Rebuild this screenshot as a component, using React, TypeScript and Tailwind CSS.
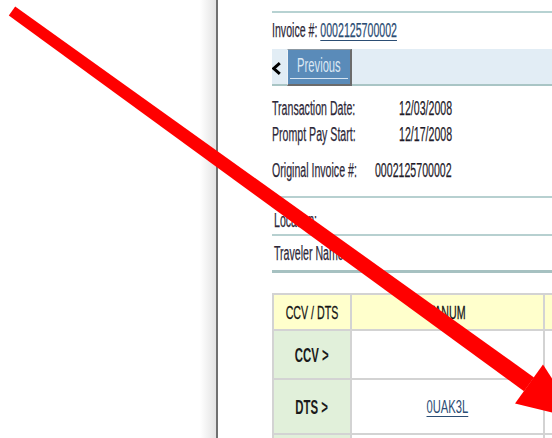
import React from "react";

function Sq({ children, className = "" }: { children: React.ReactNode; className?: string }) {
  return <span className={`inline-block whitespace-nowrap ${className}`}>{children}</span>;
}

function InfoRow({ label, value, className = "" }: { label: string; value: string; className?: string }) {
  return (
    <div className={`grid h-[22px] grid-cols-[180px] ${className}`}>
      <div className="col-start-1 row-start-1">
        <Sq className="origin-left scale-x-[0.53] text-[20px] leading-[22px] text-[#2d2838] [-webkit-text-stroke:0.25px_#2d2838]">{label}</Sq>
      </div>
      <div className="col-start-1 row-start-1 flex justify-end">
        <Sq className="origin-right scale-x-[0.53] text-[20px] leading-[22px] text-[#1f1c2a] [-webkit-text-stroke:0.25px_#1f1c2a]">{value}</Sq>
      </div>
    </div>
  );
}

function Rule({ className }: { className: string }) {
  return <div className={`w-full ${className}`} />;
}

function Arrow() {
  // shaft widens slightly toward the head, head points down-right
  return (
    <svg className="pointer-events-none absolute inset-0" width="552" height="438" viewBox="0 0 552 438">
      <polygon points="8.8,15.5 15.2,6.5 534,377.4 524,391.2" fill="#ff0000" />
      <polygon points="515,403.5 543,364.5 578,419" fill="#ff0000" />
    </svg>
  );
}

export default function App() {
  return (
    <div className="relative h-[438px] w-[552px] overflow-hidden bg-white font-['Liberation_Sans',Arial,sans-serif]">
      <div className="flex h-full">
        <div className="w-[200px] shrink-0 bg-white" />
        <div className="w-[16px] shrink-0 bg-linear-to-r from-white to-[#e3e3e3]" />
        <div className="w-[2px] shrink-0 bg-[#707070]" />
        <main className="min-w-0 flex-1 overflow-hidden">
          <div className="flex w-[600px] flex-col pl-[54px] pt-[11px]">
            <Rule className="h-[2px] bg-[#b7d2d2]" />

            <div className="h-[36px] pt-[6px]">
              <Sq className="origin-left scale-x-[0.53] text-[20px] leading-[22px] text-[#2d2838] [-webkit-text-stroke:0.25px_currentColor]">
                Invoice #:{" "}
                <a className="text-[#2b4d74] underline decoration-1 underline-offset-[3px]">0002125700002</a>
              </Sq>
            </div>

            <div className="flex h-[37px] items-start border-b-2 border-[#a9c5c5] bg-[#e2edf5]">
              <svg className="mt-[13px] shrink-0" width="9" height="13" viewBox="0 0 9 13">
                <path d="M7.8 1.2 L1.8 6.5 L7.8 11.8" fill="none" stroke="#000" strokeWidth="3" />
              </svg>
              <div className="ml-[6px] flex h-[37px] w-[65px] shrink-0 flex-col border-t border-r-2 border-b-2 border-l border-t-[#8b98a3] border-r-[#6b6b6b] border-b-[#6b6b6b] border-l-[#eef3f7] bg-[#5a8bb9] px-[2px]">
                <div className="flex h-[29px] items-center justify-center border-b border-[#d6e4f1] pt-[1px]">
                  <Sq className="origin-center scale-x-[0.56] text-[20px] leading-[22px] text-[#dce8f4]">Previous</Sq>
                </div>
              </div>
            </div>

            <InfoRow className="mt-[11px]" label="Transaction Date:" value="12/03/2008" />
            <InfoRow className="mt-[4px]" label="Prompt Pay Start:" value="12/17/2008" />
            <InfoRow className="mt-[14px]" label="Original Invoice #:" value="0002125700002" />

            <Rule className="mt-[15px] h-[2px] bg-[#b7d0d0]" />
            <div className="mt-[11px] h-[22px] pl-[2px]">
              <Sq className="origin-left scale-x-[0.53] text-[20px] leading-[22px] text-[#2d2838] [-webkit-text-stroke:0.25px_#2d2838]">Location:</Sq>
            </div>
            <Rule className="mt-[3px] h-[2px] bg-[#b7d0d0]" />
            <div className="mt-[6px] h-[22px] pl-[2px]">
              <Sq className="origin-left scale-x-[0.53] text-[20px] leading-[22px] text-[#2d2838] [-webkit-text-stroke:0.25px_#2d2838]">Traveler Name:</Sq>
            </div>
            <Rule className="mt-[6px] h-[3px] bg-[#a6c1c1]" />

            <div className="mt-[20px] grid w-[520px] grid-cols-[76px_191px_240px] grid-rows-[34px_47px_53px_40px] gap-[2px] border-2 border-[#d3d3d3] bg-[#d3d3d3]">
              <div className="flex items-center justify-center bg-[#ffffcc] pt-[1px]">
                <Sq className="scale-x-[0.56] text-[19px] leading-[22px] text-[#141414] [-webkit-text-stroke:0.3px_#141414]">CCV / DTS</Sq>
              </div>
              <div className="flex items-center justify-center bg-[#ffffcc] pt-[1px]">
                <Sq className="scale-x-[0.56] text-[19px] leading-[22px] text-[#141414] [-webkit-text-stroke:0.3px_#141414]">TANUM</Sq>
              </div>
              <div className="bg-[#ffffcc]" />

              <div className="flex items-center justify-center bg-[#e1f0da]">
                <Sq className="scale-x-[0.57] text-[20px] font-bold leading-[22px] text-[#1a1a1a]">CCV &gt;</Sq>
              </div>
              <div className="bg-white" />
              <div className="bg-white" />

              <div className="flex items-center justify-center bg-[#e1f0da]">
                <Sq className="scale-x-[0.57] text-[20px] font-bold leading-[22px] text-[#1a1a1a]">DTS &gt;</Sq>
              </div>
              <div className="flex items-center justify-center bg-white">
                <Sq className="scale-x-[0.59] text-[19px] leading-[22px] text-[#2b4d74]">
                  <a className="underline decoration-1 underline-offset-[3px]">0UAK3L</a>
                </Sq>
              </div>
              <div className="bg-white" />

              <div className="bg-[#e1f0da]" />
              <div className="bg-white" />
              <div className="bg-white" />
            </div>
          </div>
        </main>
      </div>
      <Arrow />
    </div>
  );
}
